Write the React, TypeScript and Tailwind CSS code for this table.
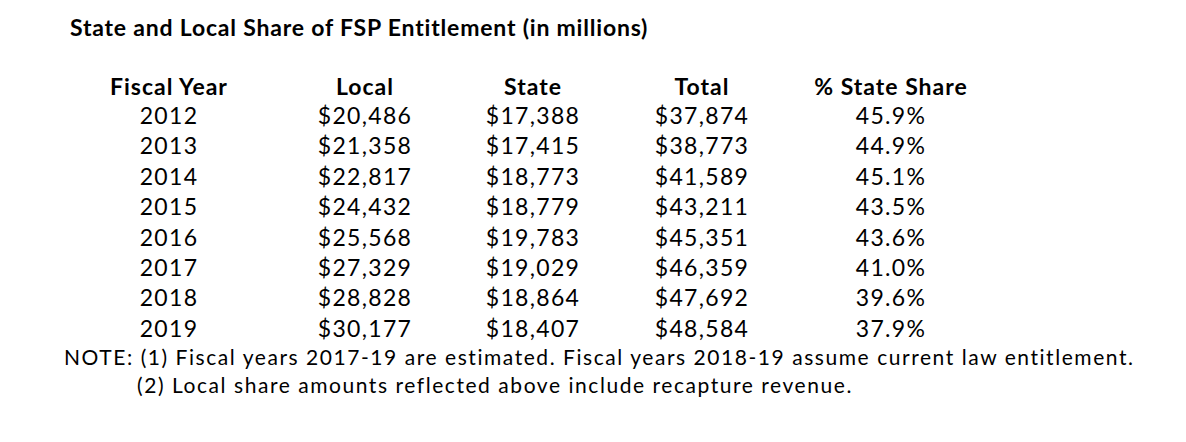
import React from "react";

const rows = [
  ["2012", "$20,486", "$17,388", "$37,874", "45.9%"],
  ["2013", "$21,358", "$17,415", "$38,773", "44.9%"],
  ["2014", "$22,817", "$18,773", "$41,589", "45.1%"],
  ["2015", "$24,432", "$18,779", "$43,211", "43.5%"],
  ["2016", "$25,568", "$19,783", "$45,351", "43.6%"],
  ["2017", "$27,329", "$19,029", "$46,359", "41.0%"],
  ["2018", "$28,828", "$18,864", "$47,692", "39.6%"],
  ["2019", "$30,177", "$18,407", "$48,584", "37.9%"],
];

const headers = ["Fiscal Year", "Local", "State", "Total", "% State Share"];

function App() {
  return (
    <div className="w-[1186px] h-[442px] bg-white text-black font-['Lato',sans-serif] overflow-hidden">
      <h1 className="pt-[13px] pl-[70px] text-[23px] leading-[28px] tracking-[0.8px] font-bold">
        State and Local Share of FSP Entitlement (in millions)
      </h1>

      <div className="mt-[32px] pl-[69px]">
        <div className="grid grid-cols-[200px_192px_144px_194px_184px] text-[23px] leading-[27px] tracking-[1px] font-bold">
          {headers.map((h) => (
            <div key={h} className="text-center whitespace-nowrap">
              {h}
            </div>
          ))}
        </div>
        {rows.map((r) => (
          <div
            key={r[0]}
            className="grid grid-cols-[200px_192px_144px_194px_184px] text-[23px] leading-[30.4px] tracking-[1.3px]"
          >
            {r.map((c, i) => (
              <div key={i} className="text-center whitespace-nowrap">
                {c}
              </div>
            ))}
          </div>
        ))}
      </div>

      <div className="pl-[64px] text-[21px] leading-[28px] tracking-[1.55px]">
        <p className="whitespace-nowrap">
          NOTE: (1) Fiscal years 2017-19 are estimated. Fiscal years 2018-19 assume current law entitlement.
        </p>
        <p className="pl-[73px] whitespace-nowrap">
          (2) Local share amounts reflected above include recapture revenue.
        </p>
      </div>
    </div>
  );
}

export default App;
